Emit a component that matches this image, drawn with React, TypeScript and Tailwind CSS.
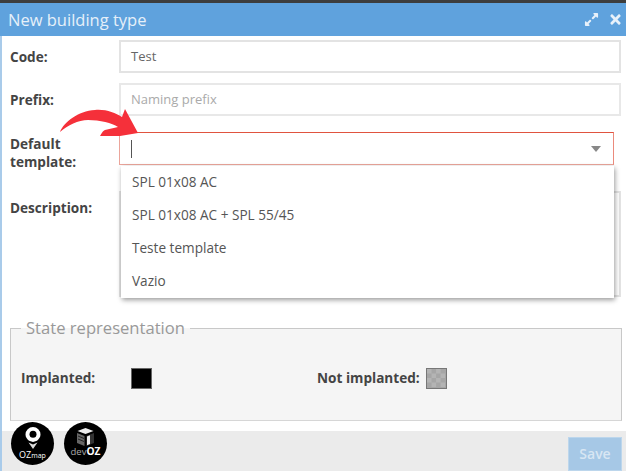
import React from 'react';
import { FaExpandAlt, FaTimes } from 'react-icons/fa';

const font = { fontFamily: '"Open Sans", sans-serif' };

function FieldRow({ label, className, children }: { label: React.ReactNode; className: string; children: React.ReactNode }) {
  return (
    <div className={`flex ${className}`}>
      <label className="w-[117px] shrink-0 pl-2 text-[13.6px] font-bold leading-[18px] text-[#444]">{label}</label>
      {children}
    </div>
  );
}

function PinLogo() {
  return (
    <div className="flex h-[43px] w-[43px] flex-col items-center rounded-full bg-black pt-[5px]">
      <svg width="16" height="22" viewBox="0 0 16 22">
        <path d="M8 0a7.500 7.500 0 0 1 7.500 7.500c0 2.800-1.700 4.600-3.500 6.300L8 15l-4-1.200C2.200 12.100.5 10.300.5 7.500A7.500 7.500 0 0 1 8 0z" fill="#fff" />
        <circle cx="8" cy="7.300" r="3.500" fill="#000" />
        <path d="M3.500 15.500L8 22l4.500-6.500L8 17.500z" fill="#ddd" />
      </svg>
      <span className="mt-[1px] text-[9px] leading-[9px] text-white">
        OZ<span className="text-[7px]">map</span>
      </span>
    </div>
  );
}

function CubeLogo() {
  return (
    <div className="flex h-[43px] w-[43px] flex-col items-center rounded-full bg-black pt-[6px]">
      <svg width="19" height="18" viewBox="0 0 19 18">
        <path d="M9.500 0l8 3-8 3-8-3z" fill="#eee" />
        <path d="M1 5l7.500 3v10L1 15z" fill="#666" />
        <path d="M2 8l6 2.500M2 11l6 2.500" stroke="#222" fill="none" />
        <path d="M10.500 8L18 5v10l-7.500 3z" fill="#333" />
        <path d="M11 8.500l3-1.200V16l-3 1.200z" fill="#eee" />
      </svg>
      <span className="text-[9.500px] leading-[11px] text-[#aaa]">
        dev<span className="text-[10.200px] font-bold text-white">OZ</span>
      </span>
    </div>
  );
}

export default function App() {
  return (
    <div className="relative flex h-[471px] w-[626px] flex-col overflow-hidden bg-white" style={font}>
      <div className="h-[3px] shrink-0 bg-[#3d3d3d]" />

      {/* Title bar */}
      <div className="flex h-[33px] shrink-0 items-center justify-between bg-[#5fa2dd] pl-2 pr-[3px]">
        <h1 className="text-[16.5px] leading-[33px] text-[#e6f0f9]">New building type</h1>
        <div className="flex items-center gap-[9px] text-[#e8f1fa]">
          <FaExpandAlt className="h-[15px] w-[15px]" />
          <FaTimes className="h-[15px] w-[15px]" />
        </div>
      </div>

      <div className="flex flex-1 flex-col border-l-2 border-[#a9cbea]">
        <FieldRow label="Code:" className="mt-1 h-[33px] items-center">
          <div className="flex h-[33px] w-[502px] items-center border-2 border-[#e3e3e3] pl-[10px] text-[13px] text-[#666]">Test</div>
        </FieldRow>

        <FieldRow label="Prefix:" className="mt-[10px] h-[33px] items-center">
          <div className="flex h-[33px] w-[502px] items-center border-2 border-[#e8e8e8] pl-[10px] text-[13px] text-[#aaa]">Naming prefix</div>
        </FieldRow>

        <FieldRow label={<span className="block pt-[3px]">Default<br />template:</span>} className="mt-4 h-[33px] items-start">
          <div className="flex h-[33px] w-[495px] items-center justify-between border border-[#e0533f] border-b-[#eba59b] border-l-[#eba59b] border-r-[#eb8a7c] pl-[11px] pr-3">
            <span className="h-[18px] w-px bg-[#555]" />
            <span className="h-0 w-0 border-x-[5px] border-t-[6px] border-x-transparent border-t-[#888]" />
          </div>
        </FieldRow>

        <FieldRow label="Description:" className="mt-[26px] h-[106px] items-start pt-2">
          <div className="-mt-2 h-[106px] w-[502px] border-2 border-[#e3e3e3]" />
        </FieldRow>

        <fieldset className="mx-2 mt-[19px] h-[105px] w-[612px] border border-[#c8c8c8] border-b-[#d6d6d6] bg-[#f5f5f5] pl-[10px]">
          <legend className="px-[5px] text-[16.6px] leading-6 text-[#999]">State representation</legend>
          <div className="flex items-center pt-[28px] text-[13.6px] font-bold text-[#444]">
            <span className="w-[110px]">Implanted:</span>
            <span className="h-[21px] w-[21px] border border-[#666] bg-black" />
            <span className="ml-[165px] w-[109px]">Not implanted:</span>
            <svg width="21" height="21" viewBox="0 0 21 21" className="border border-[#777]">
              <rect width="21" height="21" fill="#a6a6a6" />
              <path d="M0 0h5v5H0zM10 0h5v5h-5zM5 5h5v5H5zM15 5h5v5h-5zM0 10h5v5H0zM10 10h5v5h-5zM5 15h5v5H5zM15 15h5v5h-5z" fill="#b4b4b4" />
            </svg>
          </div>
        </fieldset>

        {/* Footer */}
        <div className="mt-[10px] flex h-10 shrink-0 items-end justify-between bg-[#ebebeb] pl-[9px] pr-[4px]">
          <div className="mb-[6px] flex gap-[10px]">
            <PinLogo />
            <CubeLogo />
          </div>
          <button className="h-[34px] w-[54px] border border-[#bcd6ec] bg-[#a6c8e6] text-sm font-semibold text-[#d8e6f3]">Save</button>
        </div>
      </div>

      {/* Open dropdown */}
      <ul className="absolute left-[121px] top-[166px] h-[132px] w-[493px] bg-white text-[13.6px] text-[#555] shadow-[1px_2px_5px_rgba(0,0,0,0.4)]">
        <li className="flex h-[33px] items-center pl-[11px]">SPL 01x08 AC</li>
        <li className="flex h-[33px] items-center pl-[11px]">SPL 01x08 AC + SPL 55/45</li>
        <li className="flex h-[33px] items-center pl-[11px]">Teste template</li>
        <li className="flex h-[33px] items-center pl-[11px]">Vazio</li>
      </ul>

      {/* Red annotation arrow */}
      <svg className="absolute left-[56px] top-[105px]" width="86" height="34" viewBox="0 0 86 34">
        <path d="M4 27C8 17 22 6 39 5C50 4 59 8 66 12L69 4L82 28C76 29 70 30 64 31L44 31C46 27 48 25 49 25C53 24 58 23 62 22C56 18 44 15 32 15C22 15 12 20 4 27Z" fill="#f5303a" />
      </svg>
    </div>
  );
}
